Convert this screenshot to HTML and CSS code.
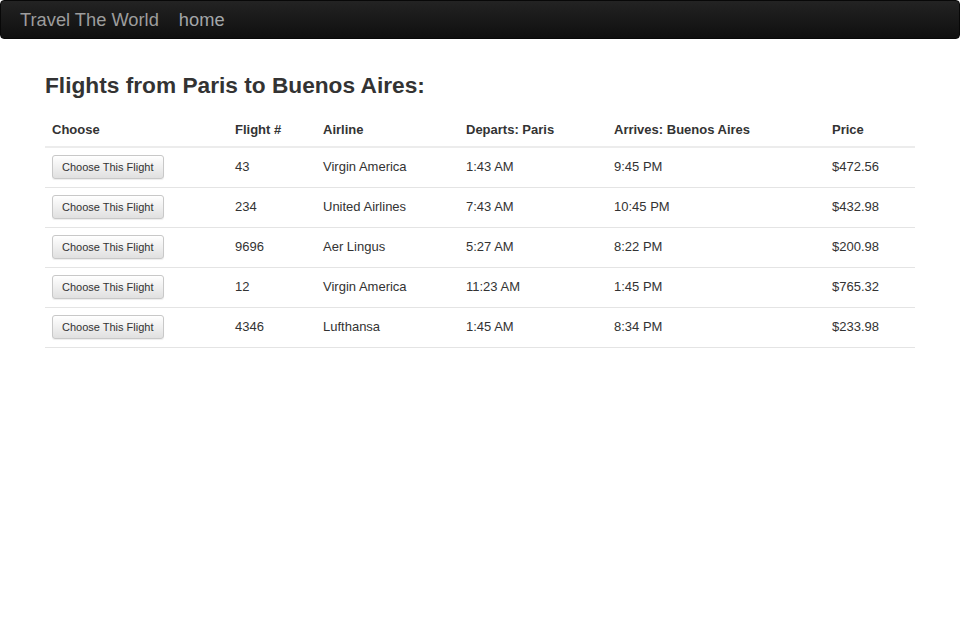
FILE: index.html
```html
<!DOCTYPE html>
<html>
<head>
<meta charset="utf-8">
<link rel="stylesheet" href="styles.css">
</head>
<body>
<nav class="navbar">
  <a class="brand">Travel The World</a>
  <a class="nav-link">home</a>
</nav>
<main class="container">
  <h2 class="title">Flights from Paris to Buenos Aires:</h2>
  <table class="flights">
    <colgroup>
      <col class="c1"><col class="c2"><col class="c3"><col class="c4"><col class="c5"><col class="c6">
    </colgroup>
    <thead>
      <tr><th>Choose</th><th>Flight #</th><th>Airline</th><th>Departs: Paris</th><th>Arrives: Buenos Aires</th><th>Price</th></tr>
    </thead>
    <tbody>
      <tr><td><button class="btn">Choose This Flight</button></td><td>43</td><td>Virgin America</td><td>1:43 AM</td><td>9:45 PM</td><td>$472.56</td></tr>
      <tr><td><button class="btn">Choose This Flight</button></td><td>234</td><td>United Airlines</td><td>7:43 AM</td><td>10:45 PM</td><td>$432.98</td></tr>
      <tr><td><button class="btn">Choose This Flight</button></td><td>9696</td><td>Aer Lingus</td><td>5:27 AM</td><td>8:22 PM</td><td>$200.98</td></tr>
      <tr><td><button class="btn">Choose This Flight</button></td><td>12</td><td>Virgin America</td><td>11:23 AM</td><td>1:45 PM</td><td>$765.32</td></tr>
      <tr><td><button class="btn">Choose This Flight</button></td><td>4346</td><td>Lufthansa</td><td>1:45 AM</td><td>8:34 PM</td><td>$233.98</td></tr>
    </tbody>
  </table>
</main>
</body>
</html>
```
FILE: styles.css
```css
html, body {
  margin: 0;
  padding: 0;
  background: #fff;
  font-family: "Liberation Sans", Arial, sans-serif;
  font-size: 13px;
  color: #333;
}
.navbar {
  height: 39px;
  box-sizing: border-box;
  display: flex;
  align-items: center;
  padding: 0 19px;
  gap: 20px;
  background: linear-gradient(to bottom, #232323 0%, #0f0f0f 100%);
  border: 1px solid #080808;
  border-radius: 4px;
}
.brand, .nav-link {
  font-size: 18.3px;
  color: #9d9d9d;
  text-decoration: none;
  line-height: 20px;
}
.nav-link {
  color: #a3a6a9;
}
.container {
  padding: 0 45px;
}
.title {
  margin: 32px 0 0;
  font-size: 22.7px;
  line-height: 28px;
  font-weight: bold;
  color: #333;
}
.flights {
  margin-top: 12px;
  width: 870px;
  border-collapse: collapse;
  table-layout: fixed;
}
.c1 { width: 183px; }
.c2 { width: 88px; }
.c3 { width: 143px; }
.c4 { width: 148px; }
.c5 { width: 218px; }
.c6 { width: 90px; }
.flights th {
  text-align: left;
  font-weight: bold;
  padding: 9px 7px 7px;
  line-height: 19px;
  border-bottom: 2px solid #ececec;
}
.flights td {
  height: 24px;
  padding: 7px 7px 8px;
  line-height: 24px;
  border-bottom: 1px solid #e4e4e4;
  vertical-align: middle;
}
.btn {
  display: block;
  height: 24px;
  padding: 0 9px;
  font-family: "Liberation Sans", Arial, sans-serif;
  font-size: 11px;
  line-height: 22px;
  color: #333;
  background: linear-gradient(to bottom, #ffffff 0%, #e0e0e0 100%);
  border: 1px solid #c8c8c8;
  border-radius: 3px;
  box-shadow: inset 0 1px 0 rgba(255,255,255,.15), 0 1px 1px rgba(0,0,0,.075);
}
```
